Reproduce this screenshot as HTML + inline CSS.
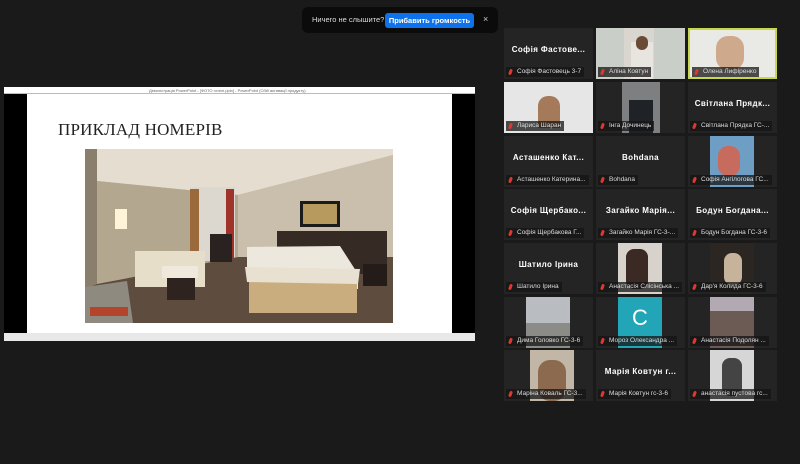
<!DOCTYPE html>
<html><head><meta charset="utf-8"><style>
*{margin:0;padding:0;box-sizing:border-box}
body{width:800px;height:464px;background:#1a1a1a;position:relative;overflow:hidden;font-family:"Liberation Sans","DejaVu Sans",sans-serif}
.pop{position:absolute;left:302px;top:7px;width:196px;height:26px;background:#0b0b0b;border-radius:6px}
.pop .t{position:absolute;left:10px;top:8px;font-size:7.5px;color:#ddd}
.pop .b{position:absolute;left:83px;top:6px;width:89px;height:15px;background:#0e72ed;border-radius:3px;color:#fff;font-size:7.5px;font-weight:bold;text-align:center;line-height:15px}
.pop .x{position:absolute;left:181px;top:7px;color:#ccc;font-size:9px}
.win{position:absolute;left:4px;top:87px;width:471px;height:254px;background:#000}
.tb{position:absolute;left:0;top:0;width:471px;height:7px;background:#fff;border-bottom:1px solid #bbb}
.tb span{position:absolute;left:145px;top:1px;font-size:4px;color:#666}
.slide{position:absolute;left:23px;top:7px;width:425px;height:239px;background:#fff}
.st{position:absolute;left:0;top:246px;width:471px;height:8px;background:#e8e8e8}
.h{position:absolute;left:58px;top:120px;font-family:"Liberation Serif",serif;font-size:17px;color:#222;letter-spacing:0.2px}
.tile{position:absolute;width:89px;height:51px;background:#242424;overflow:hidden}
.nm{position:absolute;left:0;right:0;top:17px;text-align:center;color:#fff;font-size:8px;font-weight:bold;white-space:nowrap;letter-spacing:0.4px}
.lb{position:absolute;left:2px;top:39px;height:10px;background:rgba(20,20,20,.75);color:#ddd;font-size:6.5px;line-height:10px;padding:0 3px 0 11px;white-space:nowrap;max-width:85px;overflow:hidden}
.lb:before{content:"";position:absolute;left:3px;top:2px;width:3px;height:6px;background:#e0382f;border-radius:2px;transform:rotate(20deg)}
.v{position:absolute;top:0;height:51px}
</style></head><body>
<div class="pop"><span class="t">Ничего не слышите?</span><div class="b">Прибавить громкость</div><span class="x">×</span></div>

<div class="win">
<div class="tb"><span>Демонстрація PowerPoint - [ФОТО готелі.pptx] - PowerPoint (Сбій активації продукту)</span></div>
<div class="slide"></div>
<div class="st"></div>
</div>
<div class="h">ПРИКЛАД НОМЕРІВ</div>
<svg style="position:absolute;left:85px;top:149px" width="308" height="174" viewBox="0 0 308 174">
<rect width="308" height="174" fill="#b9ad98"/>
<polygon points="0,0 308,0 308,6 153,46 12,32" fill="#e4ddd0"/>
<polygon points="153,46 308,6 308,110 153,112" fill="#c9bfac"/>
<polygon points="12,32 153,46 153,110 12,135" fill="#b4a78f"/>
<rect x="105" y="38" width="45" height="74" fill="#ddd8cf"/>
<rect x="105" y="40" width="9" height="72" fill="#9a6a3c"/>
<rect x="141" y="40" width="8" height="72" fill="#a0342a"/>
<rect x="215" y="52" width="40" height="26" fill="#1b1b1b"/>
<rect x="218" y="55" width="34" height="20" fill="#b79a5e"/>
<rect x="0" y="0" width="12" height="174" fill="#8a7e6c"/>
<polygon points="12,135 153,108 308,108 308,174 0,174 0,140" fill="#5e4d3f"/>
<rect x="192" y="82" width="110" height="43" fill="#352a24"/>
<rect x="125" y="85" width="22" height="28" fill="#2a2220"/>
<rect x="212" y="110" width="30" height="14" fill="#2b2521"/>
<polygon points="162,98 255,97 273,125 273,140 162,130" fill="#ede8dd"/>
<rect x="164" y="120" width="108" height="44" fill="#c9ad7e"/>
<polygon points="160,118 275,120 273,135 162,133" fill="#e8e1d2"/>
<rect x="278" y="115" width="24" height="22" fill="#241c18"/>
<rect x="30" y="60" width="12" height="20" fill="#fff4d8"/>
<rect x="50" y="102" width="70" height="36" fill="#e6dec9"/>
<rect x="77" y="117" width="36" height="12" fill="#efe9dd"/>
<rect x="82" y="129" width="28" height="22" fill="#2e231e"/>
<polygon points="0,138 42,132 48,174 0,174" fill="#8f8a80"/>
<rect x="5" y="158" width="38" height="9" fill="#b4442b"/>
</svg>

<!-- row 0 -->
<div class="tile" style="left:504px;top:28px"><div class="nm">Софія Фастове...</div><div class="lb">Софія Фастовець 3-7</div></div>
<div class="tile" style="left:596px;top:28px;background:#c9cec8"><div class="v" style="left:28px;width:30px;background:#d9d6cf"></div><div class="v" style="left:35px;top:14px;width:22px;height:37px;background:#e8e4df"></div><div class="v" style="left:40px;top:8px;width:12px;height:14px;background:#6b4a35;border-radius:6px"></div><div class="lb">Аліна Ковтун</div></div>
<div class="tile" style="left:688px;top:28px;background:#e9e9e6;border:2px solid #c8d84a"><div class="v" style="left:26px;top:6px;width:28px;height:34px;background:#cfa98c;border-radius:12px"></div><div class="lb" style="top:37px">Олена Лифіренко</div></div>
<!-- row 1 -->
<div class="tile" style="left:504px;top:82px;background:#e6e6e6"><div class="v" style="left:34px;top:14px;width:22px;height:32px;background:#a57a5a;border-radius:10px 10px 0 0"></div><div class="lb">Лариса Шаран</div></div>
<div class="tile" style="left:596px;top:82px"><div class="v" style="left:26px;width:38px;background:#7d7f80"></div><div class="v" style="left:33px;top:18px;width:24px;height:33px;background:#1f2226"></div><div class="lb">Інга Дочинець</div></div>
<div class="tile" style="left:688px;top:82px"><div class="nm">Світлана Прядк...</div><div class="lb">Світлана Прядка ГС-...</div></div>
<!-- row 2 -->
<div class="tile" style="left:504px;top:136px"><div class="nm">Асташенко Кат...</div><div class="lb">Асташенко Катерина...</div></div>
<div class="tile" style="left:596px;top:136px"><div class="nm">Bohdana</div><div class="lb">Bohdana</div></div>
<div class="tile" style="left:688px;top:136px"><div class="v" style="left:22px;width:44px;background:#6f9ec4"></div><div class="v" style="left:30px;top:10px;width:22px;height:30px;background:#c76b5f;border-radius:10px"></div><div class="lb">Софія Ангілогова ГС...</div></div>
<!-- row 3 -->
<div class="tile" style="left:504px;top:189px"><div class="nm">Софія Щербако...</div><div class="lb">Софія Щербакова Г...</div></div>
<div class="tile" style="left:596px;top:189px"><div class="nm">Загайко Марія...</div><div class="lb">Загайко Марія ГС-3-...</div></div>
<div class="tile" style="left:688px;top:189px"><div class="nm">Бодун Богдана...</div><div class="lb">Бодун Богдана ГС-3-6</div></div>
<!-- row 4 -->
<div class="tile" style="left:504px;top:243px"><div class="nm">Шатило Ірина</div><div class="lb">Шатило Ірина</div></div>
<div class="tile" style="left:596px;top:243px"><div class="v" style="left:22px;width:44px;background:#d8d2cc"></div><div class="v" style="left:30px;top:6px;width:22px;height:40px;background:#3b2a24;border-radius:8px"></div><div class="lb">Анастасія Слісінська ...</div></div>
<div class="tile" style="left:688px;top:243px"><div class="v" style="left:22px;width:44px;background:#2b2622"></div><div class="v" style="left:36px;top:10px;width:18px;height:32px;background:#c7b39b;border-radius:8px"></div><div class="lb">Дар'я Колида ГС-3-6</div></div>
<!-- row 5 -->
<div class="tile" style="left:504px;top:297px"><div class="v" style="left:22px;width:44px;background:#b9bcc0"></div><div class="v" style="left:22px;top:26px;width:44px;height:25px;background:#8b8b88"></div><div class="lb">Дима Головко ГС-3-6</div></div>
<div class="tile" style="left:596px;top:297px"><div class="v" style="left:22px;width:44px;background:#22a6b7;color:#fff;font-size:22px;text-align:center;line-height:42px">C</div><div class="lb">Мороз Олександра ...</div></div>
<div class="tile" style="left:688px;top:297px"><div class="v" style="left:22px;width:44px;background:#6c5a55"></div><div class="v" style="left:22px;width:44px;height:14px;background:#b3a9b3"></div><div class="lb">Анастасія Подолян ...</div></div>
<!-- row 6 -->
<div class="tile" style="left:504px;top:350px"><div class="v" style="left:26px;width:44px;background:#c2b7a6"></div><div class="v" style="left:34px;top:10px;width:28px;height:41px;background:#8c6a4f;border-radius:12px"></div><div class="lb">Маріна Коваль ГС-3...</div></div>
<div class="tile" style="left:596px;top:350px"><div class="nm">Марія Ковтун г...</div><div class="lb">Марія Ковтун гс-3-6</div></div>
<div class="tile" style="left:688px;top:350px"><div class="v" style="left:22px;width:44px;background:#d6d6d6"></div><div class="v" style="left:34px;top:8px;width:20px;height:38px;background:#444;border-radius:8px"></div><div class="lb">анастасія пустова гс...</div></div>
</body></html>
